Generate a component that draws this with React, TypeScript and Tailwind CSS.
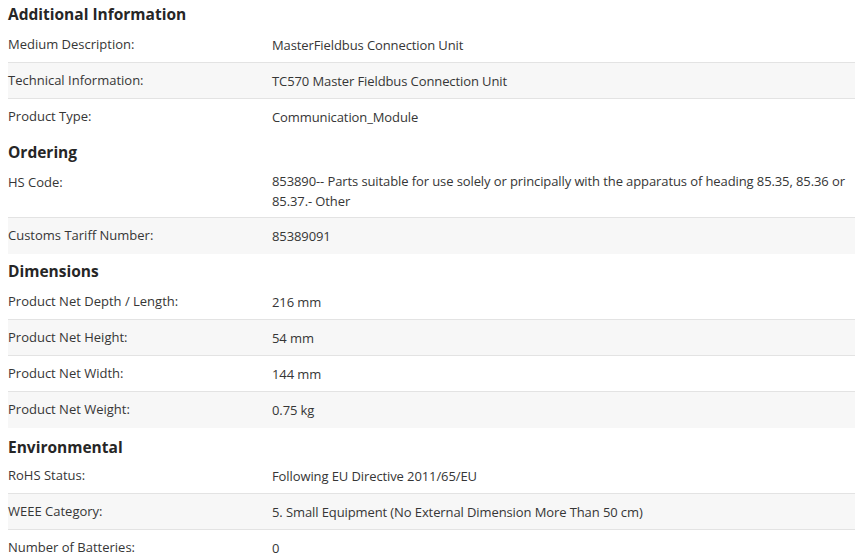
const SECTIONS: { title: string; rows: [string, string][] }[] = [
  {
    title: "Additional Information",
    rows: [
      ["Medium Description:", "MasterFieldbus Connection Unit"],
      ["Technical Information:", "TC570 Master Fieldbus Connection Unit"],
      ["Product Type:", "Communication_Module"],
    ],
  },
  {
    title: "Ordering",
    rows: [
      [
        "HS Code:",
        "853890-- Parts suitable for use solely or principally with the apparatus of heading 85.35, 85.36 or 85.37.- Other",
      ],
      ["Customs Tariff Number:", "85389091"],
    ],
  },
  {
    title: "Dimensions",
    rows: [
      ["Product Net Depth / Length:", "216 mm"],
      ["Product Net Height:", "54 mm"],
      ["Product Net Width:", "144 mm"],
      ["Product Net Weight:", "0.75 kg"],
    ],
  },
  {
    title: "Environmental",
    rows: [
      ["RoHS Status:", "Following EU Directive 2011/65/EU"],
      ["WEEE Category:", "5. Small Equipment (No External Dimension More Than 50 cm)"],
      ["Number of Batteries:", "0"],
    ],
  },
];

export default function App() {
  return (
    <div className="min-h-screen bg-white pl-2 text-[13px] leading-5 text-[#363636] [font-family:'Open_Sans',sans-serif]">
      {SECTIONS.map((section, i) => (
        <div key={section.title}>
          <h3
            className={`flex items-center text-[15.5px] font-bold text-[#262626] ${
              i > 0 ? "mt-1 h-[26px]" : "h-[27px]"
            } ${i === 3 ? "pt-1" : ""}`}
          >
            {section.title}
          </h3>
          <div className="divide-y divide-[#e3e3e3]">
            {section.rows.map(([label, value], j) => (
              <div
                key={label}
                className={`grid min-h-[36px] grid-cols-[264px_1fr] items-center py-[6px] ${
                  j % 2 === 1 ? "bg-[#f7f7f7]" : ""
                }`}
              >
                <div className="self-start pt-px">{label}</div>
                <div className="tracking-[-0.1px]">{value}</div>
              </div>
            ))}
          </div>
        </div>
      ))}
    </div>
  );
}
